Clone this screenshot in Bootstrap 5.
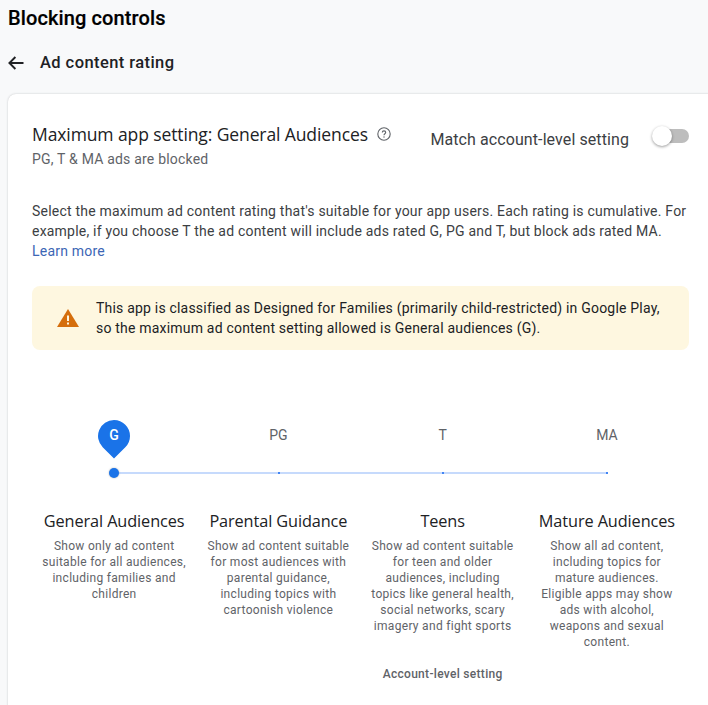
<!DOCTYPE html>
<html lang="en">
<head>
<meta charset="utf-8">
<title>Ad content rating</title>
<link href="https://cdn.jsdelivr.net/npm/bootstrap@5.3.0/dist/css/bootstrap.min.css" rel="stylesheet">
<style>
html,body{height:705px;overflow:hidden}
body{background:#f8f9fa;font-family:Roboto,"Liberation Sans",sans-serif;color:#3c4043;font-size:14px}
.shell{padding:6px 0 0 8px}
.pg-title{font-size:20px;font-weight:500;line-height:24px;color:#000;margin:0;-webkit-text-stroke:.2px #000;letter-spacing:.12px}
.sub-head{margin-top:13px;height:40px;gap:16px}
.sub-title{font-size:16.5px;font-weight:500;line-height:24px;color:#202124;margin:0;letter-spacing:.42px}
.back-svg{width:16px;height:14px;display:block}
.sheet{margin-top:11px;margin-right:-20px;background:#fff;border-radius:8px 0 0 0;box-shadow:0 0 2px rgba(60,64,67,.3);padding:27px 39px 0 24px;height:640px}
.max-title{font-family:"Open Sans",Roboto,sans-serif;font-size:17.55px;line-height:26px;color:#202124;margin:0;letter-spacing:-.12px}
.help-svg{width:14px;height:14px;margin-left:9px}
.blocked{font-size:14px;line-height:20px;color:#5f6368;margin-top:2px;letter-spacing:.2px}
.match{font-size:16px;line-height:24px;color:#3c4043;margin-top:7px;margin-right:24px;letter-spacing:.09px}
.sw{position:relative;width:36px;height:14px;border-radius:7px;background:#bdbdbd;margin:8px 0 0}
.sw::after{content:"";position:absolute;left:-1px;top:-3px;width:20px;height:20px;border-radius:50%;background:#fff;box-shadow:0 1px 3px rgba(0,0,0,.4)}
.top-row{height:52px}
.intro{font-size:14px;line-height:20px;color:#3c4043;margin:28px 0 0;letter-spacing:.21px}
.intro a{color:#3c66b5;text-decoration:none}
.warn{margin-top:25px;height:64px;background:#fef7e0;border-radius:8px;color:#202124;line-height:20px;letter-spacing:.2px}
.warn-svg{width:22px;height:20px;margin:0 17px 0 25px;flex:none}
.scale{margin-top:70px}
.cols{display:grid;grid-template-columns:repeat(4,1fr)}
.mark-cell{height:38px;text-align:center;line-height:30px;color:#5f6368;position:relative}
.mark-cell span{position:relative}
.pin-svg{position:absolute;left:50%;margin-left:-16px;top:0;width:32px;height:39px}
.pin-g{color:#fff;font-weight:500;font-size:14px}
.rail{margin:14px 81px 0 82px;height:2px;background:#c6dafc;display:flex;justify-content:space-between;position:relative}
.tick{width:2px;height:2px;background:#4285f4}
.knob{position:absolute;left:-5px;top:-4px;width:10px;height:10px;border-radius:50%;background:#1a73e8;box-shadow:0 0 2px rgba(0,0,0,.3)}
.desc-cols{margin-top:37px}
.desc-col{text-align:center;padding:0 10px}
.desc-h{font-family:"Open Sans",Roboto,sans-serif;font-size:16.3px;line-height:20px;color:#202124;margin:0 -8px;letter-spacing:-.1px;white-space:nowrap}
.desc-p{font-size:12px;line-height:16px;color:#5f6368;margin:7px 0 0;letter-spacing:.3px}
.acct{font-size:12px;font-weight:500;line-height:16px;color:#5f6368;text-align:center;margin:32px 0 0;letter-spacing:.3px}
</style>
</head>
<body>
<div class="shell">
  <h1 class="pg-title">Blocking controls</h1>
  <div class="d-flex align-items-center sub-head">
    <svg class="back-svg" viewBox="0 0 16 14" aria-hidden="true"><path d="M15.5 7H1.6M7.4 1 1.4 7l6 6" fill="none" stroke="#202124" stroke-width="1.9"/></svg>
    <h2 class="sub-title">Ad content rating</h2>
  </div>
  <div class="sheet">
    <div class="d-flex justify-content-between top-row">
      <div>
        <div class="d-flex align-items-center">
          <h3 class="max-title">Maximum app setting: General Audiences</h3>
          <svg class="help-svg" viewBox="0 0 14 14" aria-hidden="true"><circle cx="7" cy="7" r="6.2" fill="none" stroke="#5f6368" stroke-width="1.1"/><path d="M5.3 5.600c0-1 .8-1.700 1.700-1.700s1.700.7 1.700 1.600c0 1.200-1.700 1.300-1.700 2.700" fill="none" stroke="#5f6368" stroke-width="1.100"/><circle cx="7" cy="10" r=".7" fill="#5f6368"/></svg>
        </div>
        <div class="blocked">PG, T &amp; MA ads are blocked</div>
      </div>
      <div class="d-flex align-items-start">
        <div class="match">Match account-level setting</div>
        <div class="sw"></div>
      </div>
    </div>
    <p class="intro">Select the maximum ad content rating that's suitable for your app users. Each rating is cumulative. For example, if you choose T the ad content will include ads rated G, PG and T, but block ads rated MA. <a href="#">Learn more</a></p>
    <div class="warn d-flex align-items-center">
      <svg class="warn-svg" viewBox="0 0 22 20" aria-hidden="true"><path d="M11 1 22 19H0Z" fill="#d56e0c"/><path d="M10 7.500h2v5.500h-2zM10 14.500h2v2h-2z" fill="#fef7e0"/></svg>
      <div>This app is classified as Designed for Families (primarily child-restricted) in Google Play,<br>so the maximum ad content setting allowed is General audiences (G).</div>
    </div>
    <div class="scale">
      <div class="cols">
        <div class="mark-cell"><svg class="pin-svg" viewBox="0 0 32 39" aria-hidden="true"><path d="M16 0a16 16 0 0 1 16 16c0 4.400-1.800 8.400-4.700 11.300L16 38.600 4.700 27.300A16 16 0 0 1 16 0Z" fill="#1a73e8"/></svg><span class="pin-g">G</span></div>
        <div class="mark-cell">PG</div>
        <div class="mark-cell">T</div>
        <div class="mark-cell">MA</div>
      </div>
      <div class="rail"><i class="knob"></i><i class="tick"></i><i class="tick"></i><i class="tick"></i><i class="tick"></i></div>
      <div class="cols desc-cols">
        <div class="desc-col"><h4 class="desc-h">General Audiences</h4><p class="desc-p">Show only ad content suitable for all audiences, including families and children</p></div>
        <div class="desc-col"><h4 class="desc-h">Parental Guidance</h4><p class="desc-p">Show ad content suitable for most audiences with parental guidance, including topics with cartoonish violence</p></div>
        <div class="desc-col"><h4 class="desc-h">Teens</h4><p class="desc-p">Show ad content suitable for teen and older audiences, including topics like general health, social networks, scary imagery and fight sports</p><p class="acct">Account-level setting</p></div>
        <div class="desc-col"><h4 class="desc-h">Mature Audiences</h4><p class="desc-p">Show all ad content, including topics for mature audiences. Eligible apps may show ads with alcohol, weapons and sexual content.</p></div>
      </div>
    </div>
  </div>
</div>
<script src="https://cdn.jsdelivr.net/npm/bootstrap@5.3.0/dist/js/bootstrap.bundle.min.js"></script>
</body>
</html>
